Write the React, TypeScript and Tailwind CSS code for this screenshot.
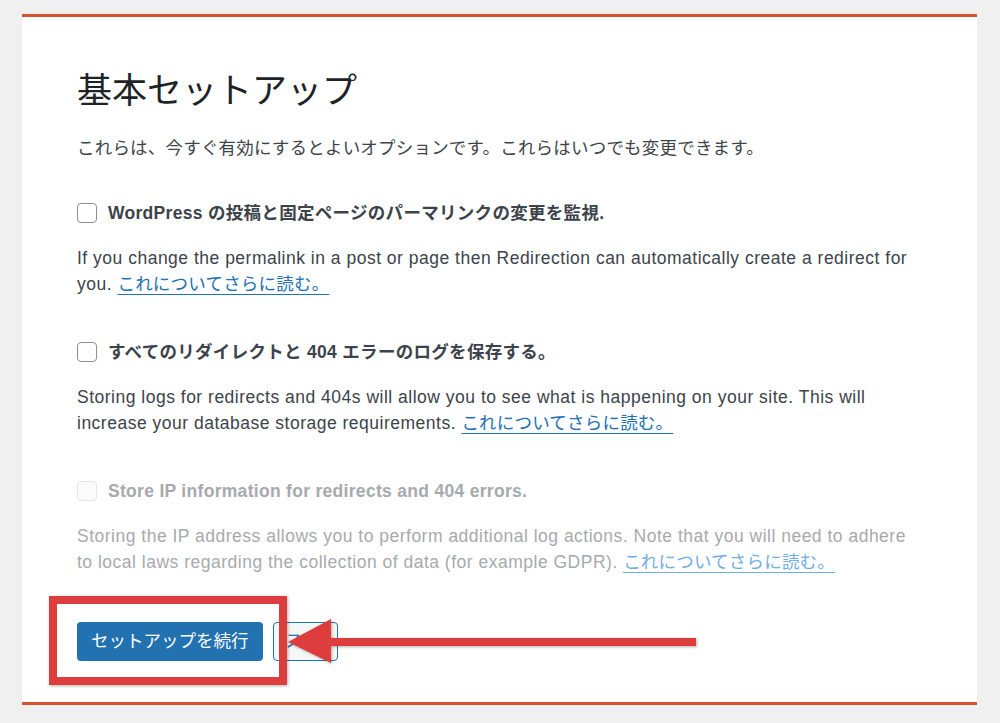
import React from 'react'

const font = { fontFamily: '"Liberation Sans", "Noto Sans CJK JP", sans-serif' }

function Checkbox({ disabled }: { disabled?: boolean }) {
  return (
    <span
      className={
        'inline-block w-5 h-5 rounded-[4px] border shrink-0 ' +
        (disabled ? 'border-[#e4e5e7] bg-[#fbfbfb]' : 'border-[#8c8f94] bg-white')
      }
    />
  )
}

function Option({
  label,
  lines,
  disabled,
  top,
}: {
  label: string
  lines: string[]
  disabled?: boolean
  top: string
}) {
  const text = disabled ? 'text-[#a7aaad]' : 'text-[#3c434a]'
  const link = disabled ? 'text-[#72aee6]' : 'text-[#2271b1]'
  return (
    <div className={top}>
      <div className="flex items-center gap-[11px] h-[26px]">
        <Checkbox disabled={disabled} />
        <span className={'text-[17.5px] font-bold tracking-[0.3px] ' + text}>{label}</span>
      </div>
      <p className={'mt-[19px] text-[17.5px] leading-[26px] tracking-[0.5px] whitespace-nowrap ' + text}>
        {lines[0]}
        <br />
        {lines[1]}{' '}
        <a href="#" className={'underline underline-offset-[4px] tracking-[0.2px] ' + link}>
          これについてさらに読む。
        </a>
      </p>
    </div>
  )
}

export default function App() {
  return (
    <div className="relative w-[1000px] h-[723px] overflow-hidden bg-[#f0f0f1] pt-[14px] pl-[22px]" style={font}>
      <div className="w-[955px] h-[691px] bg-white border-t-[3px] border-b-[3px] border-[#d4532a] pl-[55px] pr-[30px]">
        <h1 className="mt-[51px] text-[35px] leading-[45px] font-normal text-[#1d2327]">基本セットアップ</h1>
        <p className="mt-[22px] text-[17.5px] leading-[26px] tracking-[0.2px] text-[#3c434a]">
          これらは、今すぐ有効にするとよいオプションです。これらはいつでも変更できます。
        </p>

        <Option
          top="mt-[39px]"
          label="WordPress の投稿と固定ページのパーマリンクの変更を監視."
          lines={[
            'If you change the permalink in a post or page then Redirection can automatically create a redirect for',
            'you.',
          ]}
        />
        <Option
          top="mt-[42px]"
          label="すべてのリダイレクトと 404 エラーのログを保存する。"
          lines={[
            'Storing logs for redirects and 404s will allow you to see what is happening on your site. This will',
            'increase your database storage requirements.',
          ]}
        />
        <Option
          top="mt-[42px]"
          disabled
          label="Store IP information for redirects and 404 errors."
          lines={[
            'Storing the IP address allows you to perform additional log actions. Note that you will need to adhere',
            'to local laws regarding the collection of data (for example GDPR).',
          ]}
        />

        <div className="mt-[47px] flex gap-[10px]">
          <button className="h-[39px] px-[14px] rounded-[4px] bg-[#2271b1] text-white text-[17.5px]">
            セットアップを続行
          </button>
          <button className="h-[39px] w-[65px] px-[12px] rounded-[4px] border border-[#2271b1] bg-[#f6f7f7] text-[#2271b1] text-[17px] overflow-hidden whitespace-nowrap">
            スキップ
          </button>
        </div>
      </div>

      {/* annotation: red frame */}
      <div className="absolute left-[49px] top-[596px] w-[238px] h-[89px] border-[8px] border-[#dd3d3d] shadow-[1px_1px_3px_rgba(0,0,0,0.3)]" />
      {/* annotation: arrow */}
      <svg className="absolute left-0 top-0" width="1000" height="723" viewBox="0 0 1000 723">
        <g style={{ filter: 'drop-shadow(1px 1px 1.5px rgba(0,0,0,0.3))' }}>
          <rect x="325" y="638" width="371" height="8" fill="#dd3d3d" />
          <polygon points="288,642 331,619 331,663" fill="#dd3d3d" />
        </g>
      </svg>
    </div>
  )
}
